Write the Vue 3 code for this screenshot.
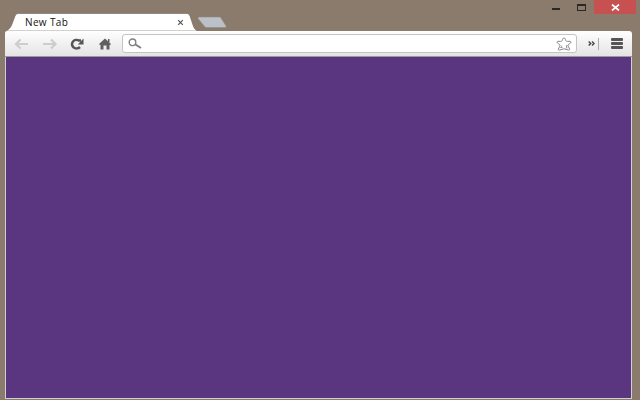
<script setup>
const title = 'New Tab'
</script>

<template>
  <div class="frame">
    <div class="strip">
      <div class="tab">
        <svg class="tab-shape" width="193" height="18" viewBox="0 0 193 18">
          <path d="M0 18 C4 17 6 14 7 11 L10 3 C11 1 12 .5 14 .5 L181 .5 C183 .5 184 1 185 3 L188 12 C189 15 190 17 193 18 Z" fill="#fff" stroke="#6e6256" stroke-width=".6"/>
        </svg>
        <span class="tab-title">{{ title }}</span>
        <svg class="tab-close" width="7" height="7" viewBox="0 0 7 7"><path d="M1.200 1.200 L5.800 5.800 M5.800 1.200 L1.200 5.800" stroke="#555" stroke-width="1.200"/></svg>
      </div>
      <svg class="new-tab" width="30" height="12" viewBox="0 0 30 12">
        <path d="M1 2.500 C1 1.500 1.500 1 2.500 1 L22 1 C23 1 23.500 1.400 24 2 L29 10 C29.500 11 29 11.500 28 11.500 L9.500 11.500 C8.500 11.500 8 11 7.500 10.500 Z" fill="#bcc0c7" stroke="#8f8b86" stroke-width=".6"/>
      </svg>
      <div class="controls">
        <svg class="min" width="8" height="2" viewBox="0 0 8 2"><rect width="8" height="2" fill="#2b2723"/></svg>
        <svg class="max" width="9" height="7" viewBox="0 0 9 7"><rect x=".5" y=".5" width="8" height="6" fill="none" stroke="#2b2723"/><rect x="1" y="1" width="7" height="1" fill="#2b2723"/></svg>
        <div class="close">
          <svg width="9" height="7" viewBox="0 0 9 7"><path d="M1 .5 L8 6.500 M8 .5 L1 6.500" stroke="#fff" stroke-width="1.700"/></svg>
        </div>
      </div>
    </div>
    <div class="toolbar">
      <svg class="btn" width="15" height="12" viewBox="0 0 15 12"><path d="M6.500 1.500 L2 6 L6.500 10.500 M2 6 H14" fill="none" stroke="#cdcdcd" stroke-width="2.200"/></svg>
      <svg class="btn fwd" width="16" height="12" viewBox="0 0 16 12"><path d="M9 1.500 L13.500 6 L9 10.500 M13.500 6 H1" fill="none" stroke="#cdcdcd" stroke-width="2.200"/></svg>
      <svg class="btn reload" width="14" height="12" viewBox="0 0 14 12"><path d="M10 9 A4.600 4.200 0 1 1 9 2.600 L11 2.600" fill="none" stroke="#555" stroke-width="2.500"/><path d="M13.500 .5 V6.500 H7.800 Z" fill="#555"/></svg>
      <svg class="btn home" width="14" height="12" viewBox="0 0 14 12"><path d="M7 .5 L13 6 L12 7 L11.500 6.800 L11.500 11.500 L8.500 11.500 L8.500 7.500 L5.500 7.500 L5.500 11.500 L2.500 11.500 L2.500 6.800 L2 7 L1 6 Z" fill="#606060"/><rect x="10" y="1" width="1.500" height="3" fill="#606060"/></svg>
      <div class="omnibox">
        <svg width="14" height="11" viewBox="0 0 14 11"><circle cx="4.500" cy="4.300" r="3.300" fill="#fff" stroke="#808080" stroke-width="1.400"/><path d="M7.500 6.500 L13 10" stroke="#808080" stroke-width="2"/></svg>
        <svg width="16" height="14" viewBox="0 0 16 14">
          <path d="M8 1 C9 1 9.300 2 9.800 3.700 C10 4.300 10.500 4.400 11.500 4.400 L14 4.300 C15 4.400 15.200 5.200 14.500 6 L12.500 7.500 C12 8 12 8.500 12.300 9.300 L13.600 12 C14 13 13 13.300 12 13 L9 12 C8.300 11.800 7.700 11.800 7 12 L4 13 C3 13.300 2 13 2.400 12 L3.700 9.300 C4 8.500 4 8 3.500 7.500 L1.500 6 C.8 5.200 1 4.400 2 4.300 L4.500 4.400 C5.500 4.400 6 4.300 6.200 3.700 C6.700 2 7 1 8 1 Z" fill="#fff" stroke="#7a7a7a" stroke-width=".9"/>
          <path d="M5 8.500 L6 9.500 L4.500 10.500 H6.500 M10 8.500 L11.300 8.500 L10 10 L11.300 10.800 L9.800 11" fill="none" stroke="#8a8a8a" stroke-width=".8"/>
        </svg>
      </div>
      <svg class="more" width="7" height="5" viewBox="0 0 7 5"><path d="M.7 .5 L2.700 2.500 L.7 4.500 M4 .5 L6 2.500 L4 4.500" fill="none" stroke="#444" stroke-width="1.400"/></svg>
      <span class="sep"></span>
      <div class="menu"><i></i><i></i><i></i></div>
    </div>
    <div class="page"></div>
  </div>
</template>

<style scoped>
.frame {
  width: 640px;
  height: 400px;
  box-sizing: border-box;
  padding: 0 8px 1px 5px;
  background: #8a7b6c;
  display: flex;
  flex-direction: column;
  font-family: "Open Sans", "DejaVu Sans", sans-serif;
}
.strip {
  height: 31px;
  display: flex;
  align-items: flex-end;
  flex: none;
}
.tab {
  position: relative;
  width: 193px;
  height: 18px;
  flex: none;
  display: flex;
  align-items: center;
  justify-content: space-between;
  padding: 0 14px 0 20px;
  box-sizing: border-box;
}
.tab-shape { position: absolute; left: 0; top: 0; }
.tab-title {
  position: relative;
  font-size: 10px;
  letter-spacing: .35px;
  color: #111;
}
.tab-close { position: relative; }
.new-tab { margin: 0 0 3px -1px; flex: none; }
.controls {
  margin-left: auto;
  margin-right: -8px;
  align-self: flex-start;
  display: flex;
  align-items: flex-start;
}
.min { margin: 8px 17px 0 0; }
.max { margin: 4px 8px 0 0; }
.close {
  width: 42px;
  height: 14px;
  background: #c75050;
  margin-right: 4px;
  display: flex;
  align-items: center;
  justify-content: center;
}
.toolbar {
  height: 25px;
  flex: none;
  background: linear-gradient(#fff 0%, #f5f5f5 35%, #e4e4e4 100%);
  border-radius: 2px 3px 0 0;
  border-bottom: 1px solid #9a9a9a;
  display: flex;
  align-items: center;
  padding: 0 9px;
}
.btn { flex: none; margin-top: 1px; }
.fwd { margin-left: 13px; }
.reload { margin-left: 12px; }
.home { margin-left: 14px; }
.omnibox {
  margin-left: 10px;
  flex: 1;
  height: 19px;
  box-sizing: border-box;
  background: #fff;
  border: 1px solid #c4c4c4;
  border-radius: 3px;
  display: flex;
  align-items: center;
  justify-content: space-between;
  padding: 0 4px 0 5px;
}
.more { margin-left: 11px; flex: none; }
.sep {
  width: 1px;
  height: 12px;
  background: #aaa;
  margin-left: 3px;
  flex: none;
}
.menu {
  margin-left: 12px;
  width: 12px;
  flex: none;
  display: flex;
  flex-direction: column;
  gap: 1px;
}
.menu i {
  display: block;
  height: 3px;
  background: #555;
  border-radius: 1px;
}
.page {
  flex: 1;
  background: #5b3680;
  border: 1px solid #d0d0d0;
  border-top: 0;
}
</style>
